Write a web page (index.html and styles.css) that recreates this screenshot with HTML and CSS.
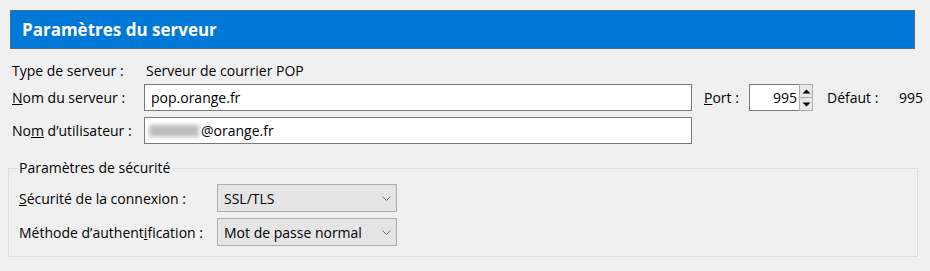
FILE: index.html
```html
<!DOCTYPE html>
<html lang="fr">
<head>
<meta charset="utf-8">
<link rel="stylesheet" href="styles.css">
</head>
<body>
<div class="page">
  <div class="header">Paramètres du serveur</div>
  <div class="server">
    <div class="row row-type">
      <span class="label">Type de serveur :</span>
      <span class="value">Serveur de courrier POP</span>
    </div>
    <div class="row row-name">
      <span class="label"><u>N</u>om du serveur :</span>
      <div class="input wide">pop.orange.fr</div>
      <span class="port-label"><u>P</u>ort :</span>
      <div class="spin">
        <div class="spin-value">995</div>
        <div class="spin-btns">
          <div class="spin-btn"><svg width="9" height="5" viewBox="0 0 9 5"><path d="M0.5 4.5 L4.5 0.5 L8.5 4.5 Z" fill="#000"/></svg></div>
          <div class="spin-btn"><svg width="9" height="5" viewBox="0 0 9 5"><path d="M0.5 0.5 L4.5 4.5 L8.5 0.5 Z" fill="#000"/></svg></div>
        </div>
      </div>
      <span class="default-label">Défaut :</span>
      <span class="default-value">995</span>
    </div>
    <div class="row row-user">
      <span class="label">No<u>m</u> d’utilisateur :</span>
      <div class="input wide user"><span class="blur"></span>@orange.fr</div>
    </div>
  </div>
  <fieldset class="security">
    <legend>Paramètres de sécurité</legend>
    <div class="srow">
      <span class="slabel"><u>S</u>écurité de la connexion :</span>
      <div class="combo"><span>SSL/TLS</span><svg class="chev" width="9" height="5" viewBox="0 0 9 5"><path d="M0.5 0.5 L4.5 4.5 L8.5 0.5" fill="none" stroke="#707070" stroke-width="1"/></svg></div>
    </div>
    <div class="srow">
      <span class="slabel">Méthode d’authent<u>i</u>fication :</span>
      <div class="combo"><span>Mot de passe normal</span><svg class="chev" width="9" height="5" viewBox="0 0 9 5"><path d="M0.5 0.5 L4.5 4.5 L8.5 0.5" fill="none" stroke="#707070" stroke-width="1"/></svg></div>
    </div>
  </fieldset>
</div>
</body>
</html>
```
FILE: styles.css
```css
html, body {
  margin: 0;
  padding: 0;
  background: #f0f0f0;
}
body {
  font-family: "Open Sans", "Noto Sans", sans-serif;
  font-size: 14px;
  color: #000;
  width: 930px;
  height: 271px;
  overflow: hidden;
}
.page {
  padding: 10px 12px 0 8px;
}
.header {
  margin-left: 2px;
  height: 37px;
  background: #0078d7;
  border: 1px solid #4d6e8d;
  color: #fff;
  font-weight: bold;
  font-size: 17px;
  line-height: 37px;
  padding-left: 11px;
  box-sizing: content-box;
  width: 892px;
}
.server {
  padding-left: 4px;
  display: flex;
  flex-direction: column;
}
.row {
  display: flex;
  align-items: center;
}
.row > * {
  flex: none;
}
.row-type {
  margin-top: 11px;
  height: 20px;
}
.row-name {
  margin-top: 4px;
  height: 27px;
}
.row-user {
  margin-top: 6px;
  height: 27px;
}
.label {
  width: 132px;
}
.value {
  padding-left: 2px;
}
.input {
  border: 1px solid #7a7a7a;
  background: #fff;
  box-sizing: border-box;
  height: 27px;
  display: flex;
  align-items: center;
  padding-left: 6px;
}
.input.user {
  padding-left: 4px;
}
.wide {
  width: 548px;
}
.blur {
  display: inline-block;
  width: 50px;
  height: 12px;
  background: #bdbdbd;
  filter: blur(2px);
  margin-right: 2px;
}
.port-label {
  margin-left: 12px;
  width: 45px;
}
.spin {
  display: flex;
  width: 64px;
  height: 27px;
  box-sizing: border-box;
}
.spin-value {
  flex: 1;
  border: 1px solid #7a7a7a;
  border-right: none;
  background: #fff;
  text-align: right;
  padding-right: 2px;
  line-height: 25px;
}
.spin-btns {
  width: 14px;
  display: flex;
  flex-direction: column;
  border: 1px solid #adadad;
  box-sizing: border-box;
}
.spin-btn {
  flex: 1;
  display: flex;
  align-items: center;
  justify-content: center;
  background: #e8e8e8;
}
.spin-btn + .spin-btn {
  border-top: 1px solid #adadad;
}
.default-label {
  margin-left: 14px;
  width: 72px;
}
.security {
  margin: 14px 0 0 0;
  width: 910px;
  box-sizing: border-box;
  border: 1px solid #dcdcdc;
  padding: 6px 10px 10px 10px;
}
.security legend {
  padding: 0 2px;
  margin-left: -2px;
  line-height: 20px;
}
.srow {
  display: flex;
  align-items: center;
  height: 28px;
}
.srow + .srow {
  margin-top: 6px;
}
.slabel {
  width: 198px;
  flex: none;
}
.combo {
  width: 180px;
  height: 28px;
  box-sizing: border-box;
  border: 1px solid #adadad;
  background: #e5e5e5;
  display: flex;
  align-items: center;
  justify-content: space-between;
  padding: 0 5px 0 6px;
}
.chev {
  display: block;
}
```
